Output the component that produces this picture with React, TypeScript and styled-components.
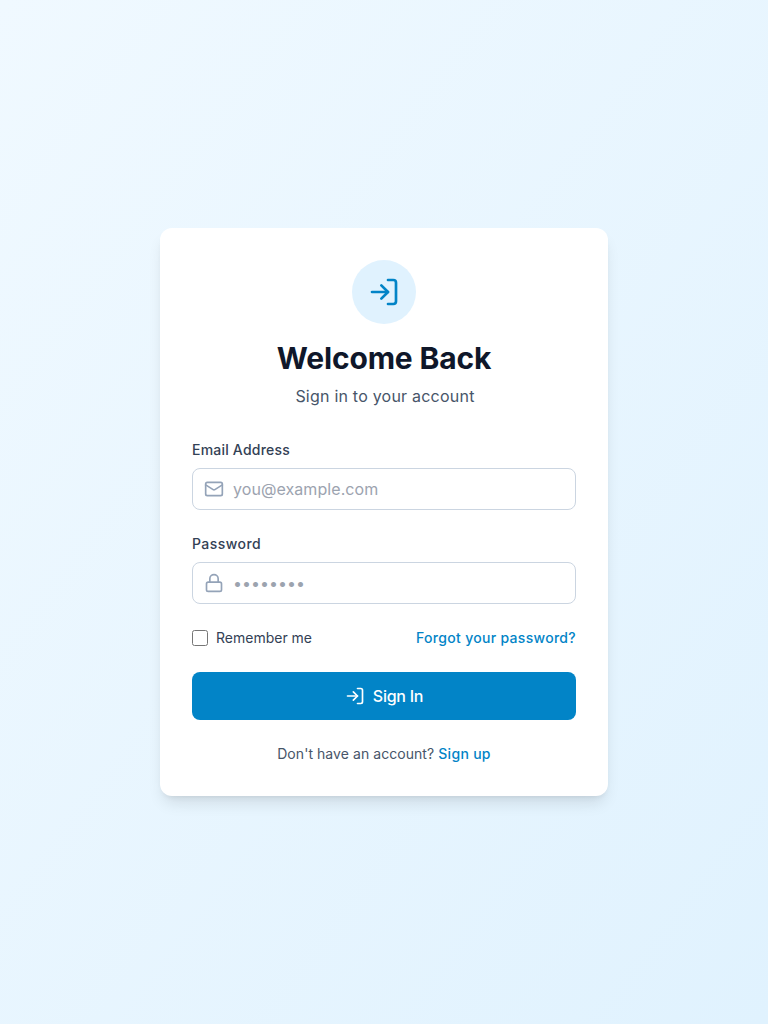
import React from "react";
import styled, { createGlobalStyle } from "styled-components";

const GlobalStyle = createGlobalStyle`
  *, *::before, *::after { box-sizing: border-box; }
  body {
    margin: 0;
    font-family: Inter, sans-serif;
    line-height: 1.5;
    color: #0f172a;
  }
`;

const Page = styled.main`
  min-height: 100vh;
  display: flex;
  align-items: center;
  justify-content: center;
  padding: 16px;
  background: linear-gradient(to bottom right, #f0f9ff, #e0f2fe);
`;

const Card = styled.section`
  width: 448px;
  padding: 32px;
  background: #fff;
  border-radius: 12px;
  box-shadow: 0 10px 15px -3px rgba(0, 0, 0, 0.1), 0 4px 6px -4px rgba(0, 0, 0, 0.1);
`;

const Header = styled.header`
  display: flex;
  flex-direction: column;
  align-items: center;
  margin-bottom: 32px;
`;

const Badge = styled.div`
  display: flex;
  align-items: center;
  justify-content: center;
  width: 64px;
  height: 64px;
  margin-bottom: 16px;
  border-radius: 50%;
  background: #e0f2fe;
  color: #0284c7;
`;

const Title = styled.h1`
  margin: 0 0 8px;
  font-size: 30px;
  line-height: 36px;
  font-weight: 700;
  letter-spacing: -0.17px;
`;

const Subtitle = styled.p`
  margin: 0;
  padding-left: 2px;
  font-size: 16px;
  line-height: 24px;
  letter-spacing: 0.22px;
  color: #475569;
`;

const Form = styled.form`
  display: flex;
  flex-direction: column;
  gap: 24px;
`;

const Field = styled.div`
  display: flex;
  flex-direction: column;
  gap: 8px;
`;

const Label = styled.label<{ $tracking: number }>`
  font-size: 14px;
  line-height: 20px;
  font-weight: 500;
  letter-spacing: ${(p) => p.$tracking}px;
  color: #334155;
`;

const InputBox = styled.div`
  display: flex;
  align-items: center;
  gap: 9px;
  height: 42px;
  padding: 0 12px 0 11px;
  border: 1px solid #cbd5e1;
  border-radius: 8px;
  color: #94a3b8;
`;

const Input = styled.input<{ $tracking?: number }>`
  flex: 1;
  min-width: 0;
  height: 24px;
  padding: 0;
  border: 0;
  outline: 0;
  background: transparent;
  font: inherit;
  font-size: 16px;
  line-height: 24px;
  letter-spacing: ${(p) => p.$tracking ?? 0}px;
  color: #0f172a;
  &::placeholder { color: #9ca3af; opacity: 1; }
`;

const Options = styled.div`
  display: flex;
  align-items: center;
  justify-content: space-between;
  font-size: 14px;
  line-height: 20px;
`;

const Remember = styled.label`
  display: flex;
  align-items: center;
  gap: 8px;
  color: #334155;
`;

const Checkbox = styled.input`
  width: 16px;
  height: 16px;
  margin: 0;
`;

const Link = styled.a`
  font-weight: 500;
  letter-spacing: 0.3px;
  color: #0284c7;
  text-decoration: none;
`;

const Submit = styled.button`
  display: flex;
  align-items: center;
  justify-content: center;
  gap: 8px;
  height: 48px;
  padding: 0;
  border: 0;
  border-radius: 8px;
  background: #0284c7;
  color: #fff;
  font: inherit;
  font-size: 16px;
  line-height: 24px;
  font-weight: 500;
  letter-spacing: -0.25px;
`;

const Footer = styled.p`
  margin: 24px 0 0;
  text-align: center;
  font-size: 14px;
  line-height: 20px;
  letter-spacing: 0.06px;
  color: #475569;
`;

const Icon = styled.svg.attrs({
  viewBox: "0 0 24 24",
  fill: "none",
  stroke: "currentColor",
  strokeWidth: 2,
  strokeLinecap: "round",
  strokeLinejoin: "round",
})<{ $size: number }>`
  flex: none;
  display: block;
  width: ${(p) => p.$size}px;
  height: ${(p) => p.$size}px;
`;

const LogInIcon = ({ size }: { size: number }) => (
  <Icon $size={size}>
    <path d="M15 3h4a2 2 0 0 1 2 2v14a2 2 0 0 1-2 2h-4" />
    <polyline points="10 17 15 12 10 7" />
    <line x1="15" x2="3" y1="12" y2="12" />
  </Icon>
);

const MailIcon = () => (
  <Icon $size={20}>
    <rect width="20" height="16" x="2" y="4" rx="2" />
    <path d="m22 7-8.97 5.7a1.94 1.94 0 0 1-2.06 0L2 7" />
  </Icon>
);

const LockIcon = () => (
  <Icon $size={20}>
    <rect width="18" height="11" x="3" y="11" rx="2" ry="2" />
    <path d="M7 11V7a5 5 0 0 1 10 0v4" />
  </Icon>
);

export default function App() {
  return (
    <>
      <GlobalStyle />
      <Page>
        <Card>
          <Header>
            <Badge><LogInIcon size={32} /></Badge>
            <Title>Welcome Back</Title>
            <Subtitle>Sign in to your account</Subtitle>
          </Header>
          <Form onSubmit={(e) => e.preventDefault()}>
            <Field>
              <Label htmlFor="email" $tracking={0.21}>Email Address</Label>
              <InputBox>
                <MailIcon />
                <Input id="email" type="email" placeholder="you@example.com" $tracking={0.07} />
              </InputBox>
            </Field>
            <Field>
              <Label htmlFor="password" $tracking={0.44}>Password</Label>
              <InputBox>
                <LockIcon />
                <Input id="password" type="password" placeholder="••••••••" />
              </InputBox>
            </Field>
            <Options>
              <Remember>
                <Checkbox type="checkbox" />
                Remember me
              </Remember>
              <Link href="#">Forgot your password?</Link>
            </Options>
            <Submit type="submit">
              <LogInIcon size={20} />
              Sign In
            </Submit>
          </Form>
          <Footer>
            Don't have an account? <Link href="#">Sign up</Link>
          </Footer>
        </Card>
      </Page>
    </>
  );
}
